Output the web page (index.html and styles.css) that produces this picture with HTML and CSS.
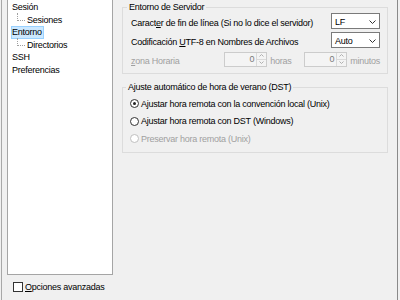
FILE: index.html
```html
<!DOCTYPE html>
<html lang="es">
<head>
<meta charset="utf-8">
<title>Entorno</title>
<link rel="stylesheet" href="styles.css">
</head>
<body>
<div class="window">
  <aside class="side">
    <div class="tree">
      <ul class="nodes">
        <li><span class="item">Sesión</span>
          <ul class="children"><li class="child"><span class="item">Sesiones</span></li></ul>
        </li>
        <li><span class="item selected">Entorno</span>
          <ul class="children"><li class="child"><span class="item">Directorios</span></li></ul>
        </li>
        <li><span class="item">SSH</span></li>
        <li><span class="item">Preferencias</span></li>
      </ul>
    </div>
    <label class="check"><span class="box"></span><span><u>O</u>pciones avanzadas</span></label>
  </aside>
  <main class="content">
    <fieldset class="group server">
      <legend>Entorno de Servidor</legend>
      <div class="row">
        <span class="lbl">Caract<u>e</u>r de fin de línea (Si no lo dice el servidor)</span>
        <div class="combo"><span>LF</span><svg class="chev" width="7" height="4" viewBox="0 0 7 4"><polyline points="0.5,0.5 3.5,3.5 6.5,0.5" fill="none" stroke="#333" stroke-width="1"/></svg></div>
      </div>
      <div class="row">
        <span class="lbl">Codificación <u>U</u>TF-8 en Nombres de Archivos</span>
        <div class="combo"><span>Auto</span><svg class="chev" width="7" height="4" viewBox="0 0 7 4"><polyline points="0.5,0.5 3.5,3.5 6.5,0.5" fill="none" stroke="#333" stroke-width="1"/></svg></div>
      </div>
      <div class="row">
        <span class="lbl disabled"><u>z</u>ona Horaria</span>
        <div class="spin">
          <span class="val">0</span>
          <span class="btns">
            <span class="btn"><svg width="5" height="3" viewBox="0 0 5 3"><polyline points="0.5,2.5 2.5,0.5 4.5,2.5" fill="none" stroke="#b0b0b0" stroke-width="1"/></svg></span>
            <span class="btn"><svg width="5" height="3" viewBox="0 0 5 3"><polyline points="0.5,0.5 2.5,2.5 4.5,0.5" fill="none" stroke="#b0b0b0" stroke-width="1"/></svg></span>
          </span>
        </div>
        <span class="unit hours disabled">horas</span>
        <div class="spin">
          <span class="val">0</span>
          <span class="btns">
            <span class="btn"><svg width="5" height="3" viewBox="0 0 5 3"><polyline points="0.5,2.5 2.5,0.5 4.5,2.5" fill="none" stroke="#b0b0b0" stroke-width="1"/></svg></span>
            <span class="btn"><svg width="5" height="3" viewBox="0 0 5 3"><polyline points="0.5,0.5 2.5,2.5 4.5,0.5" fill="none" stroke="#b0b0b0" stroke-width="1"/></svg></span>
          </span>
        </div>
        <span class="unit mins disabled">minutos</span>
      </div>
    </fieldset>
    <fieldset class="group dst">
      <legend>A<u>j</u>uste automático de hora de verano (DST)</legend>
      <div class="radio"><span class="dot checked"></span><span>A<u>j</u>ustar hora remota con la convención local (Unix)</span></div>
      <div class="radio"><span class="dot"></span><span>A<u>j</u>ustar hora remota con DST (Windows)</span></div>
      <div class="radio off"><span class="dot"></span><span>Preservar hora remota (Unix)</span></div>
    </fieldset>
  </main>
</div>
</body>
</html>
```

FILE: styles.css
```css
* { box-sizing: border-box; }

body {
  margin: 0;
  background: #f0f0f0;
  font-family: "Liberation Sans", Arial, sans-serif;
  font-size: 9px;
  letter-spacing: -0.25px;
  color: #000;
}

u { text-decoration-thickness: 1px; text-underline-offset: 1px; }

.window {
  display: flex;
  gap: 9px;
  width: 397px;
  height: 300px;
  margin-left: 1px;
  padding: 0 9px 0 5px;
  border-left: 1px solid #a8a8a8;
  border-right: 1px solid #8a8a8a;
}

/* left side */
.side {
  width: 106px;
  display: flex;
  flex-direction: column;
}

.tree {
  height: 275px;
  background: #fff;
  border: 1px solid #a5a5a5;
  border-top: 0;
  padding-top: 1px;
}

.nodes, .children {
  list-style: none;
  margin: 0;
}

.nodes { padding: 0 0 0 3px; }
.children { padding: 0 0 0 15px; }

.item {
  display: block;
  width: max-content;
  line-height: 10.5px;
  border: 1px solid transparent;
  padding: 0 1px 0 0;
}

.selected {
  background: #cce8ff;
  border-color: #99d1ff;
}

.child { position: relative; }

.child::before {
  content: "";
  position: absolute;
  left: -9px;
  top: -1px;
  width: 7px;
  height: 7px;
  border-left: 1px dotted #a0a0a0;
  border-bottom: 1px dotted #a0a0a0;
}

.check {
  display: flex;
  align-items: center;
  gap: 2px;
  margin: 7px 0 0 6px;
  line-height: 10px;
}

.box {
  width: 10px;
  height: 10px;
  border: 1px solid #333;
  background: #fff;
}

/* right side */
.content {
  width: 266px;
  display: flex;
  flex-direction: column;
}

.group {
  margin: 0;
  min-width: 0;
  border: 1px solid #dcdcdc;
  padding: 0 7px 0 8px;
}

.group legend {
  padding: 0 2px;
  margin-left: -4px;
  line-height: 12px;
}

.dst legend { margin-left: -5px; }

.server {
  margin-top: 1px;
  padding-bottom: 6px;
}

.row {
  display: flex;
  align-items: center;
  height: 16px;
}

.row + .row { margin-top: 3px; }

.lbl {
  flex: 1;
  padding-top: 4px;
  line-height: 10px;
}

.disabled { color: #a0a0a0; }

.combo {
  width: 49px;
  height: 16px;
  border: 1px solid #7a7a7a;
  background: #fff;
  display: flex;
  align-items: center;
  justify-content: space-between;
  padding: 1px 3px 0 3px;
}

.spin {
  width: 43px;
  height: 15px;
  border: 1px solid #cccccc;
  background: #f4f4f4;
  display: flex;
}

.spin .val {
  flex: 1;
  text-align: right;
  padding-right: 2px;
  line-height: 13px;
  color: #7a7a7a;
}

.spin .btns {
  width: 10px;
  display: flex;
  flex-direction: column;
  border-left: 1px solid #dadada;
}

.spin .btn {
  flex: 1;
  display: flex;
  align-items: center;
  justify-content: center;
}

.spin .btn + .btn { border-top: 1px solid #dadada; }

.unit {
  padding-top: 4px;
  line-height: 10px;
}

.hours { width: 34px; margin-left: 3px; }
.mins { margin-left: 3px; }

.dst {
  margin-top: 7px;
  padding-top: 2px;
  padding-bottom: 4px;
}

.radio {
  display: flex;
  align-items: center;
  gap: 2px;
  height: 17.5px;
}

.dot {
  width: 9px;
  height: 9px;
  margin-left: -1px;
  border-radius: 50%;
  border: 1px solid #333;
  background: #fff;
  display: flex;
  align-items: center;
  justify-content: center;
}

.dot.checked::after {
  content: "";
  width: 3px;
  height: 3px;
  border-radius: 50%;
  background: #222;
}

.radio.off { color: #a0a0a0; }
.radio.off .dot { border-color: #c0c0c0; }
```
